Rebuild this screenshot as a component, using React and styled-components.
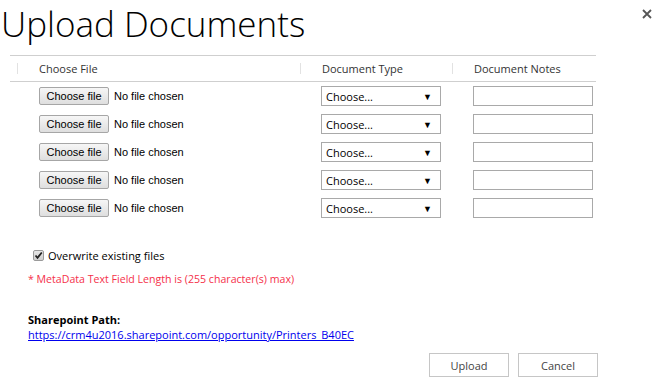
import styled, { createGlobalStyle } from "styled-components";

const GlobalStyle = createGlobalStyle`
  body {
    margin: 0;
    background: #fff;
    font-family: "Segoe UI", "Open Sans", "Liberation Sans", sans-serif;
    color: #222;
  }
`;

const Page = styled.div`
  width: 670px;
  height: 392px;
  overflow: hidden;
`;

const Header = styled.div`
  display: flex;
  justify-content: space-between;
  align-items: flex-start;
  height: 50px;
`;

const Title = styled.h1`
  margin: 0;
  padding: 0 0 0 1px;
  font-size: 35px;
  font-weight: 300;
  line-height: 48px;
  color: #000;
`;

const Close = styled.button`
  border: 0;
  background: none;
  padding: 0;
  margin: 9px 18px 0 0;
  width: 10px;
  height: 10px;
  display: flex;
`;

const Table = styled.div`
  margin: 5px 0 0 10px;
  width: 586px;
  padding-left: 7px;
  box-sizing: border-box;
`;

const HeadRow = styled.div`
  display: grid;
  grid-template-columns: 283px 152px 1fr;
  margin-left: -7px;
  padding-left: 7px;
  border-top: 1px solid #cfcfcf;
  border-bottom: 1px solid #cfcfcf;
  height: 25px;
  align-items: center;
`;

const HeadCell = styled.div`
  position: relative;
  padding-left: 22px;
  font-size: 11px;
  color: #333;
  &::before {
    content: "";
    position: absolute;
    left: 0;
    top: 2px;
    height: 11px;
    border-left: 1px solid #e2e2e2;
  }
`;

const Row = styled.div`
  display: grid;
  grid-template-columns: 283px 152px 1fr;
  height: 28px;
  align-items: center;
`;

const Cell = styled.div`
  padding-left: ${(p) => p.$pad}px;
  display: flex;
  align-items: center;
`;

const FileButton = styled.button`
  font-family: "Liberation Sans", Arial, sans-serif;
  font-size: 11px;
  color: #000;
  height: 18px;
  width: 70px;
  padding: 0;
  border: 1px solid #a6a6a6;
  border-radius: 2px;
  background: linear-gradient(#f6f6f6, #dedede);
`;

const NoFile = styled.span`
  margin-left: 5px;
  font-family: "Liberation Sans", Arial, sans-serif;
  font-size: 11px;
  color: #000;
`;

const Select = styled.div`
  width: 120px;
  height: 20px;
  box-sizing: border-box;
  border: 1px solid #a9a9a9;
  display: flex;
  align-items: center;
  justify-content: space-between;
  padding: 0 8px 0 4px;
  font-size: 11px;
  color: #000;
`;

const Arrow = styled.span`
  font-size: 9px;
  color: #000;
`;

const Notes = styled.input`
  width: 120px;
  height: 20px;
  box-sizing: border-box;
  border: 1px solid #a9a9a9;
  margin: 0;
  padding: 0 3px;
`;

const Options = styled.div`
  padding: 26px 0 0 33px;
`;

const CheckLine = styled.label`
  display: flex;
  align-items: center;
  gap: 4px;
  font-size: 11px;
  color: #000;
`;

const CheckBox = styled.span`
  width: 11px;
  height: 11px;
  box-sizing: border-box;
  border: 1px solid #9a9a9a;
  border-radius: 2px;
  background: linear-gradient(#e6e6e6, #cfcfcf);
  display: flex;
  align-items: center;
  justify-content: center;
`;

const Warning = styled.div`
  margin: 9px 0 0 -5px;
  font-size: 10.6px;
  color: #f5304a;
`;

const PathBlock = styled.div`
  margin: 26px 0 0 28px;
  width: 331px;
  overflow: hidden;
  white-space: nowrap;
`;

const PathLabel = styled.div`
  font-size: 11px;
  font-weight: 700;
  color: #000;
  line-height: 15px;
`;

const PathLink = styled.a`
  display: block;
  font-size: 11px;
  color: #0000ee;
  text-decoration: underline;
  line-height: 15px;
`;

const Footer = styled.div`
  display: flex;
  justify-content: flex-end;
  gap: 9px;
  padding: 11px 72px 0 0;
`;

const ActionButton = styled.button`
  width: 80px;
  height: 24px;
  border: 1px solid #c6c6c6;
  background: #fff;
  font-family: "Segoe UI", "Open Sans", sans-serif;
  font-size: 11px;
  color: #444;
  padding: 0;
`;

const rows = [0, 1, 2, 3, 4];

export default function App() {
  return (
    <Page>
      <GlobalStyle />
      <Header>
        <Title>Upload Documents</Title>
        <Close aria-label="Close">
          <svg width="10" height="10" viewBox="0 0 10 10">
            <path d="M1 1L9 9M9 1L1 9" stroke="#555" strokeWidth="1.8" />
          </svg>
        </Close>
      </Header>
      <Table>
        <HeadRow>
          <HeadCell>Choose File</HeadCell>
          <HeadCell>Document Type</HeadCell>
          <HeadCell>Document Notes</HeadCell>
        </HeadRow>
        {rows.map((r) => (
          <Row key={r}>
            <Cell $pad={22}>
              <FileButton>Choose file</FileButton>
              <NoFile>No file chosen</NoFile>
            </Cell>
            <Cell $pad={21}>
              <Select>
                <span>Choose...</span>
                <Arrow>▼</Arrow>
              </Select>
            </Cell>
            <Cell $pad={21}>
              <Notes type="text" />
            </Cell>
          </Row>
        ))}
      </Table>
      <Options>
        <CheckLine>
          <CheckBox>
            <svg width="9" height="9" viewBox="0 0 9 9">
              <path d="M1.5 4.5L3.5 6.8L7.8 1.5" stroke="#222" strokeWidth="1.8" fill="none" />
            </svg>
          </CheckBox>
          Overwrite existing files
        </CheckLine>
        <Warning>* MetaData Text Field Length is (255 character(s) max)</Warning>
      </Options>
      <PathBlock>
        <PathLabel>Sharepoint Path:</PathLabel>
        <PathLink href="#">https://crm4u2016.sharepoint.com/opportunity/Printers_B40EC</PathLink>
      </PathBlock>
      <Footer>
        <ActionButton>Upload</ActionButton>
        <ActionButton>Cancel</ActionButton>
      </Footer>
    </Page>
  );
}
